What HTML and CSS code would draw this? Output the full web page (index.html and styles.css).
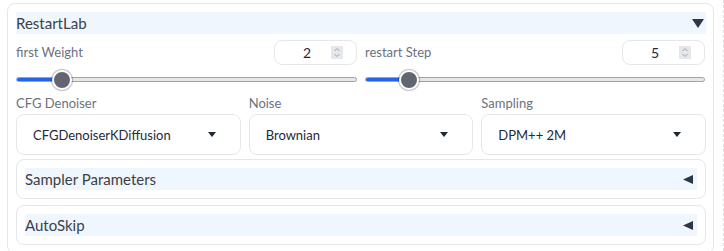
FILE: index.html
```html
<!DOCTYPE html>
<html>
<head>
<meta charset="utf-8">
<link rel="stylesheet" href="styles.css">
</head>
<body>
<div class="page">
  <div class="panel">
    <div class="acc-head">
      <span class="acc-title">RestartLab</span>
      <svg class="tri-down" width="12" height="9" viewBox="0 0 12 9"><polygon points="0,0 12,0 6,9" fill="#2d3748"/></svg>
    </div>

    <div class="sliders">
      <div class="slider-col">
        <div class="slider-top">
          <span class="label">first Weight</span>
          <div class="num">
            <span class="num-val">2</span>
            <svg class="spin" width="12" height="13" viewBox="0 0 12 13"><rect width="12" height="13" fill="#e5e7eb"/><polyline points="3.5,5 6,2.5 8.5,5" fill="none" stroke="#9ca3af" stroke-width="1"/><polyline points="3.5,8 6,10.5 8.5,8" fill="none" stroke="#9ca3af" stroke-width="1"/></svg>
          </div>
        </div>
        <div class="track-wrap">
          <div class="track"><div class="fill" style="width:46px"></div></div>
          <div class="thumb" style="left:36px"></div>
        </div>
      </div>
      <div class="slider-col">
        <div class="slider-top">
          <span class="label">restart Step</span>
          <div class="num">
            <span class="num-val">5</span>
            <svg class="spin" width="12" height="13" viewBox="0 0 12 13"><rect width="12" height="13" fill="#e5e7eb"/><polyline points="3.5,5 6,2.5 8.5,5" fill="none" stroke="#9ca3af" stroke-width="1"/><polyline points="3.5,8 6,10.5 8.5,8" fill="none" stroke="#9ca3af" stroke-width="1"/></svg>
          </div>
        </div>
        <div class="track-wrap">
          <div class="track"><div class="fill" style="width:44px"></div></div>
          <div class="thumb" style="left:34px"></div>
        </div>
      </div>
    </div>

    <div class="dropdowns">
      <div class="dd-col">
        <span class="label">CFG Denoiser</span>
        <div class="dd"><span>CFGDenoiserKDiffusion</span><svg width="8" height="5" viewBox="0 0 8 5"><polygon points="0,0 8,0 4,5" fill="#1f2937"/></svg></div>
      </div>
      <div class="dd-col">
        <span class="label">Noise</span>
        <div class="dd"><span>Brownian</span><svg width="8" height="5" viewBox="0 0 8 5"><polygon points="0,0 8,0 4,5" fill="#1f2937"/></svg></div>
      </div>
      <div class="dd-col">
        <span class="label">Sampling</span>
        <div class="dd"><span>DPM++ 2M</span><svg width="8" height="5" viewBox="0 0 8 5"><polygon points="0,0 8,0 4,5" fill="#1f2937"/></svg></div>
      </div>
    </div>

    <div class="sub-acc">
      <div class="acc-head">
        <span class="acc-title">Sampler Parameters</span>
        <svg width="10" height="9" viewBox="0 0 10 9"><polygon points="10,0 10,9 0,4.5" fill="#2d3748"/></svg>
      </div>
    </div>
    <div class="sub-acc">
      <div class="acc-head">
        <span class="acc-title">AutoSkip</span>
        <svg width="10" height="9" viewBox="0 0 10 9"><polygon points="10,0 10,9 0,4.5" fill="#2d3748"/></svg>
      </div>
    </div>
  </div>
</div>
</body>
</html>
```

FILE: styles.css
```css
html, body {
  margin: 0;
  padding: 0;
  background: #ffffff;
}
body {
  font-family: "Lato", "Noto Sans", sans-serif;
  color: #374151;
}
.page {
  width: 724px;
  height: 251px;
  box-sizing: border-box;
  border-right: 1px dashed #e0e0e0;
  padding: 3px 9px 0 7px;
  overflow: hidden;
}
.panel {
  border: 1px solid #e5e7eb;
  border-radius: 8px;
  padding: 8px 7px 8px 8px;
  display: flex;
  flex-direction: column;
}
.acc-head {
  height: 22px;
  background: #eff6fe;
  display: flex;
  align-items: center;
  justify-content: space-between;
  padding-right: 2px;
}
.acc-title {
  font-size: 15px;
  color: #3b3f47;
}
.sliders {
  margin-top: 6px;
  display: grid;
  grid-template-columns: 341px 340px;
  gap: 8px;
}
.slider-top {
  height: 25px;
  display: flex;
  align-items: center;
  justify-content: space-between;
}
.label {
  font-size: 13px;
  color: #6b7280;
}
.slider-top .label {
  margin-top: -2px;
}
.num {
  width: 83px;
  height: 25px;
  box-sizing: border-box;
  border: 1px solid #e5e7eb;
  border-radius: 8px;
  display: flex;
  align-items: center;
  justify-content: flex-end;
  padding-right: 13px;
  gap: 20px;
}
.num-val {
  font-size: 14px;
  color: #1f2937;
}
.spin {
  display: block;
}
.track-wrap {
  position: relative;
  height: 28px;
}
.track {
  position: absolute;
  left: 0;
  right: 0;
  top: 12px;
  height: 5px;
  box-sizing: border-box;
  border: 1px solid #9ca3af;
  background: #e5e7eb;
  border-radius: 3px;
  overflow: hidden;
}
.fill {
  height: 100%;
  background: #2563eb;
}
.thumb {
  position: absolute;
  top: 5px;
  width: 20px;
  height: 20px;
  box-sizing: border-box;
  border-radius: 50%;
  background: #636572;
  border: 2px solid #ffffff;
  box-shadow: 0 0 1px 1px rgba(0,0,0,0.25);
}
.dropdowns {
  margin-top: 1px;
  display: grid;
  grid-template-columns: repeat(3, 1fr);
  gap: 8px;
}
.dd-col {
  display: flex;
  flex-direction: column;
  gap: 1px;
}
.dd-col .label {
  line-height: 19px;
}
.dd {
  height: 41px;
  box-sizing: border-box;
  border: 1px solid #e5e7eb;
  border-radius: 8px;
  display: flex;
  align-items: center;
  justify-content: space-between;
  padding: 0 24px 0 16px;
  font-size: 13px;
  color: #1f2937;
}
.dd svg {
  display: block;
}
.sub-acc {
  margin-top: 4px;
  border: 1px solid #e5e7eb;
  border-radius: 8px;
  padding: 8px;
}
.sub-acc + .sub-acc {
  margin-top: 6px;
}
.sub-acc .acc-head {
  padding-right: 4px;
}
```
